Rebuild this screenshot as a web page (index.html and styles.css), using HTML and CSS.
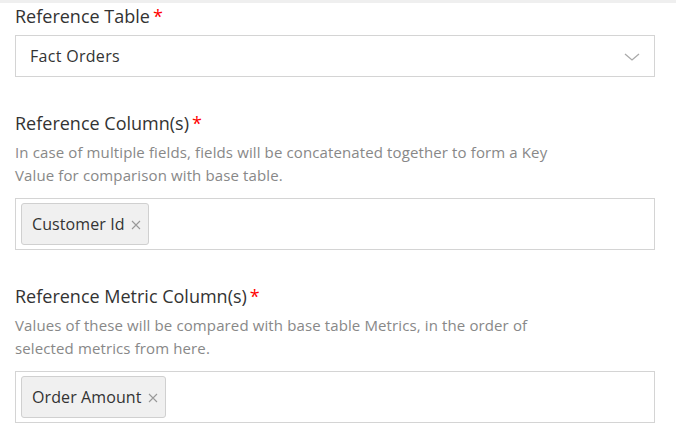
FILE: index.html
```html
<!DOCTYPE html>
<html>
<head>
<meta charset="utf-8">
<link rel="stylesheet" href="styles.css">
</head>
<body>
<div class="topbar"></div>
<div class="form">
  <div class="field">
    <div class="label">Reference Table<span class="req">*</span></div>
    <div class="select">
      <span class="value">Fact Orders</span>
      <svg class="chev" width="16" height="8" viewBox="0 0 16 8"><path d="M1 1 L8 7 L15 1" fill="none" stroke="#aaaaaa" stroke-width="1.3"/></svg>
    </div>
  </div>
  <div class="field f2">
    <div class="label">Reference Column(s)<span class="req">*</span></div>
    <div class="help">In case of multiple fields, fields will be concatenated together to form a Key<br>Value for comparison with base table.</div>
    <div class="multi">
      <span class="tag">Customer Id<svg class="x" width="10" height="10" viewBox="0 0 10 10"><path d="M1 1 L9 9 M9 1 L1 9" stroke="#999" stroke-width="1.1" fill="none"/></svg></span>
    </div>
  </div>
  <div class="field f3">
    <div class="label">Reference Metric Column(s)<span class="req">*</span></div>
    <div class="help">Values of these will be compared with base table Metrics, in the order of<br>selected metrics from here.</div>
    <div class="multi">
      <span class="tag">Order Amount<svg class="x" width="10" height="10" viewBox="0 0 10 10"><path d="M1 1 L9 9 M9 1 L1 9" stroke="#999" stroke-width="1.1" fill="none"/></svg></span>
    </div>
  </div>
</div>
</body>
</html>
```
FILE: styles.css
```css
html, body {
  margin: 0;
  padding: 0;
  background: #fff;
  font-family: "Open Sans", "Liberation Sans", sans-serif;
  color: #333;
}
.topbar {
  height: 3px;
  background: #efefef;
}
.form {
  padding: 1px 21px 0 15px;
}
.field {
  display: flex;
  flex-direction: column;
}
.f2 { margin-top: 34px; }
.f3 { margin-top: 34px; }
.label {
  font-size: 18px;
  font-weight: 400;
  line-height: 24px;
  color: #333;
}
.req {
  color: #f00;
  margin-left: 3px;
}
.select {
  margin-top: 7px;
  height: 42px;
  box-sizing: border-box;
  border: 1px solid #d4d4d4;
  display: flex;
  align-items: center;
  justify-content: space-between;
  padding: 0 14px 0 14px;
}
.value {
  font-size: 16px;
  color: #333;
  letter-spacing: 0.3px;
}
.chev { display: block; margin-top: 1px; }
.help {
  margin-top: 6px;
  font-size: 15px;
  line-height: 23px;
  color: #888;
  letter-spacing: 0.12px;
}
.multi {
  margin-top: 11px;
  height: 52px;
  box-sizing: border-box;
  border: 1px solid #d4d4d4;
  display: flex;
  align-items: center;
  padding: 4px 5px;
}
.tag {
  display: inline-flex;
  align-items: center;
  height: 42px;
  box-sizing: border-box;
  border: 1px solid #d0d0d0;
  border-radius: 3px;
  background: #f0f0f0;
  padding: 0 7px 0 10px;
  font-size: 16px;
  color: #333;
  letter-spacing: 0.1px;
}
.x {
  display: block;
  margin-left: 6px;
  margin-top: 1px;
}
```
